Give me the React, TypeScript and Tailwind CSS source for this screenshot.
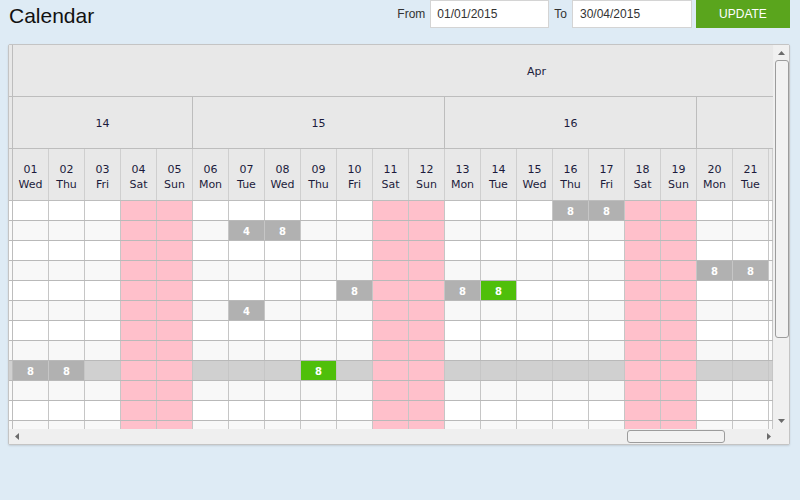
import React from 'react';

const DAY_NAMES = ['Sun', 'Mon', 'Tue', 'Wed', 'Thu', 'Fri', 'Sat'];

// April 2015 starts on a Wednesday; only the visible part of the month is drawn
const days = Array.from({ length: 21 }, (_, i) => {
  const dow = (3 + i) % 7;
  return {
    num: String(i + 1).padStart(2, '0'),
    name: DAY_NAMES[dow],
    weekend: dow === 0 || dow === 6,
  };
});

const weeks = [
  { label: '14', span: 5 },
  { label: '15', span: 7 },
  { label: '16', span: 7 },
];

type Entry = { day: number; hours: string; green?: boolean };

// rows of the resource grid, day index is 0-based
const rows: { highlight?: boolean; entries: Entry[] }[] = [
  { entries: [{ day: 15, hours: '8' }, { day: 16, hours: '8' }] },
  { entries: [{ day: 6, hours: '4' }, { day: 7, hours: '8' }] },
  { entries: [] },
  { entries: [{ day: 19, hours: '8' }, { day: 20, hours: '8' }] },
  { entries: [{ day: 9, hours: '8' }, { day: 12, hours: '8' }, { day: 13, hours: '8', green: true }] },
  { entries: [{ day: 6, hours: '4' }] },
  { entries: [] },
  { entries: [] },
  { highlight: true, entries: [{ day: 0, hours: '8' }, { day: 1, hours: '8' }, { day: 8, hours: '8', green: true }] },
  { entries: [] },
  { entries: [] },
  { entries: [] },
];

const Stub = ({ className = '' }: { className?: string }) => (
  <div className={`w-[4px] shrink-0 border-r border-[#bdbdbd] ${className}`} />
);

const CalendarGrid: React.FC = () => (
  <div className="w-[765px] h-[384px] overflow-hidden bg-white font-['DejaVu_Sans',sans-serif] text-[11px] text-[#1c1c3c]">
    <div className="w-[765px]">
      {/* Month row */}
      <div className="flex h-[52px] bg-[#e8e8e8] border-b border-[#bdbdbd]">
        <Stub />
        <div className="flex-1 flex items-center pl-[514px] pt-[3px]">Apr</div>
      </div>

      {/* Week row */}
      <div className="flex h-[52px] bg-[#e8e8e8] border-b border-[#bdbdbd]">
        <Stub />
        {weeks.map((w) => (
          <div
            key={w.label}
            style={{ width: w.span * 36 }}
            className="shrink-0 flex items-center justify-center pt-[3px] border-r border-[#bdbdbd]"
          >
            {w.label}
          </div>
        ))}
        <div className="flex-1" />
      </div>

      {/* Day row */}
      <div className="flex h-[52px] bg-[#e8e8e8] border-b border-[#bdbdbd]">
        <Stub />
        {days.map((d) => (
          <div
            key={d.num}
            className="w-[36px] shrink-0 flex flex-col items-center justify-center leading-[15px] pt-[5px] border-r border-[#cfcfcf]"
          >
            <span>{d.num}</span>
            <span>{d.name}</span>
          </div>
        ))}
        <div className="w-[4px] shrink-0 border-r border-[#cfcfcf]" />
      </div>

      {/* Body rows */}
      {rows.map((row, r) => {
        const base = row.highlight ? 'bg-[#d0d0d0]' : r % 2 === 1 ? 'bg-[#f8f8f8]' : 'bg-white';
        return (
          <div key={r} className="flex h-[20px] border-b border-[#b9b9b9]">
            <Stub className={base} />
            {days.map((d, i) => {
              const entry = row.entries.find((e) => e.day === i);
              const cellBg = entry
                ? entry.green
                  ? 'bg-[#4fbf0a]'
                  : 'bg-[#b1b1b1]'
                : d.weekend
                ? 'bg-[#ffc0cb]'
                : base;
              return (
                <div
                  key={i}
                  className={`w-[36px] shrink-0 flex items-center justify-center pt-[1px] border-r border-[#c6c6c6] text-white font-bold text-[10px] ${cellBg}`}
                >
                  {entry?.hours}
                </div>
              );
            })}
            <div className={`w-[4px] shrink-0 border-r border-[#c6c6c6] ${base}`} />
          </div>
        );
      })}
    </div>
  </div>
);

const Arrow = ({ dir }: { dir: 'up' | 'down' | 'left' | 'right' }) => {
  const pts = {
    up: '0,4 3.5,0 7,4',
    down: '0,0 3.5,4 7,0',
    left: '4,0 0,3.5 4,7',
    right: '0,0 4,3.5 0,7',
  }[dir];
  const vertical = dir === 'up' || dir === 'down';
  return (
    <svg width={vertical ? 7 : 4} height={vertical ? 4 : 7} viewBox={vertical ? '0 0 7 4' : '0 0 4 7'}>
      <polygon points={pts} fill="#6b6b6b" />
    </svg>
  );
};

export default function App() {
  return (
    <div className="w-[800px] h-[500px] bg-[#deebf5] font-['Liberation_Sans',Arial,sans-serif] overflow-hidden">
      {/* Top bar */}
      <div className="flex items-start justify-between h-[28px]">
        <h1 className="pl-[9px] pt-[3px] text-[21px] leading-[26px] text-[#111]">Calendar</h1>
        <div className="flex items-center h-[28px] pr-[10px] text-[12px] text-[#333]">
          <span className="mr-[5px]">From</span>
          <div className="w-[119px] h-[28px] bg-white border border-[#d4d4d4] flex items-center pl-[6px]">01/01/2015</div>
          <span className="ml-[5px] mr-[5px]">To</span>
          <div className="w-[120px] h-[28px] bg-white border border-[#d4d4d4] flex items-center pl-[7px]">30/04/2015</div>
          <button className="ml-[4px] w-[94px] h-[28px] bg-[#5aa51d] text-white text-[12px]">UPDATE</button>
        </div>
      </div>

      {/* Calendar panel */}
      <div className="mt-[16px] ml-[8px] w-[782px] h-[401px] border border-[#c4c4c4] rounded-[2px] bg-[#efefef] shadow-[0_1px_2px_rgba(0,0,0,0.12)] flex flex-col">
        <div className="flex h-[384px]">
          <CalendarGrid />
          {/* vertical scrollbar */}
          <div className="w-[15px] ml-[1px] flex flex-col items-center bg-[#f0f0f0]">
            <div className="h-[15px] flex items-center justify-center"><Arrow dir="up" /></div>
            <div className="w-[14px] h-[278px] border border-[#9c9c9c] rounded-[3px] bg-[#f2f2f2]" />
            <div className="flex-1" />
            <div className="h-[15px] flex items-center justify-center pb-[2px]"><Arrow dir="down" /></div>
          </div>
        </div>
        {/* horizontal scrollbar */}
        <div className="flex h-[15px] items-center bg-[#efefef]">
          <div className="w-[14px] flex justify-center pl-[2px]"><Arrow dir="left" /></div>
          <div className="ml-[604px] w-[98px] h-[13px] border border-[#9c9c9c] rounded-[3px] bg-[#f2f2f2]" />
          <div className="ml-[40px] w-[8px] flex justify-center"><Arrow dir="right" /></div>
        </div>
      </div>
    </div>
  );
}
